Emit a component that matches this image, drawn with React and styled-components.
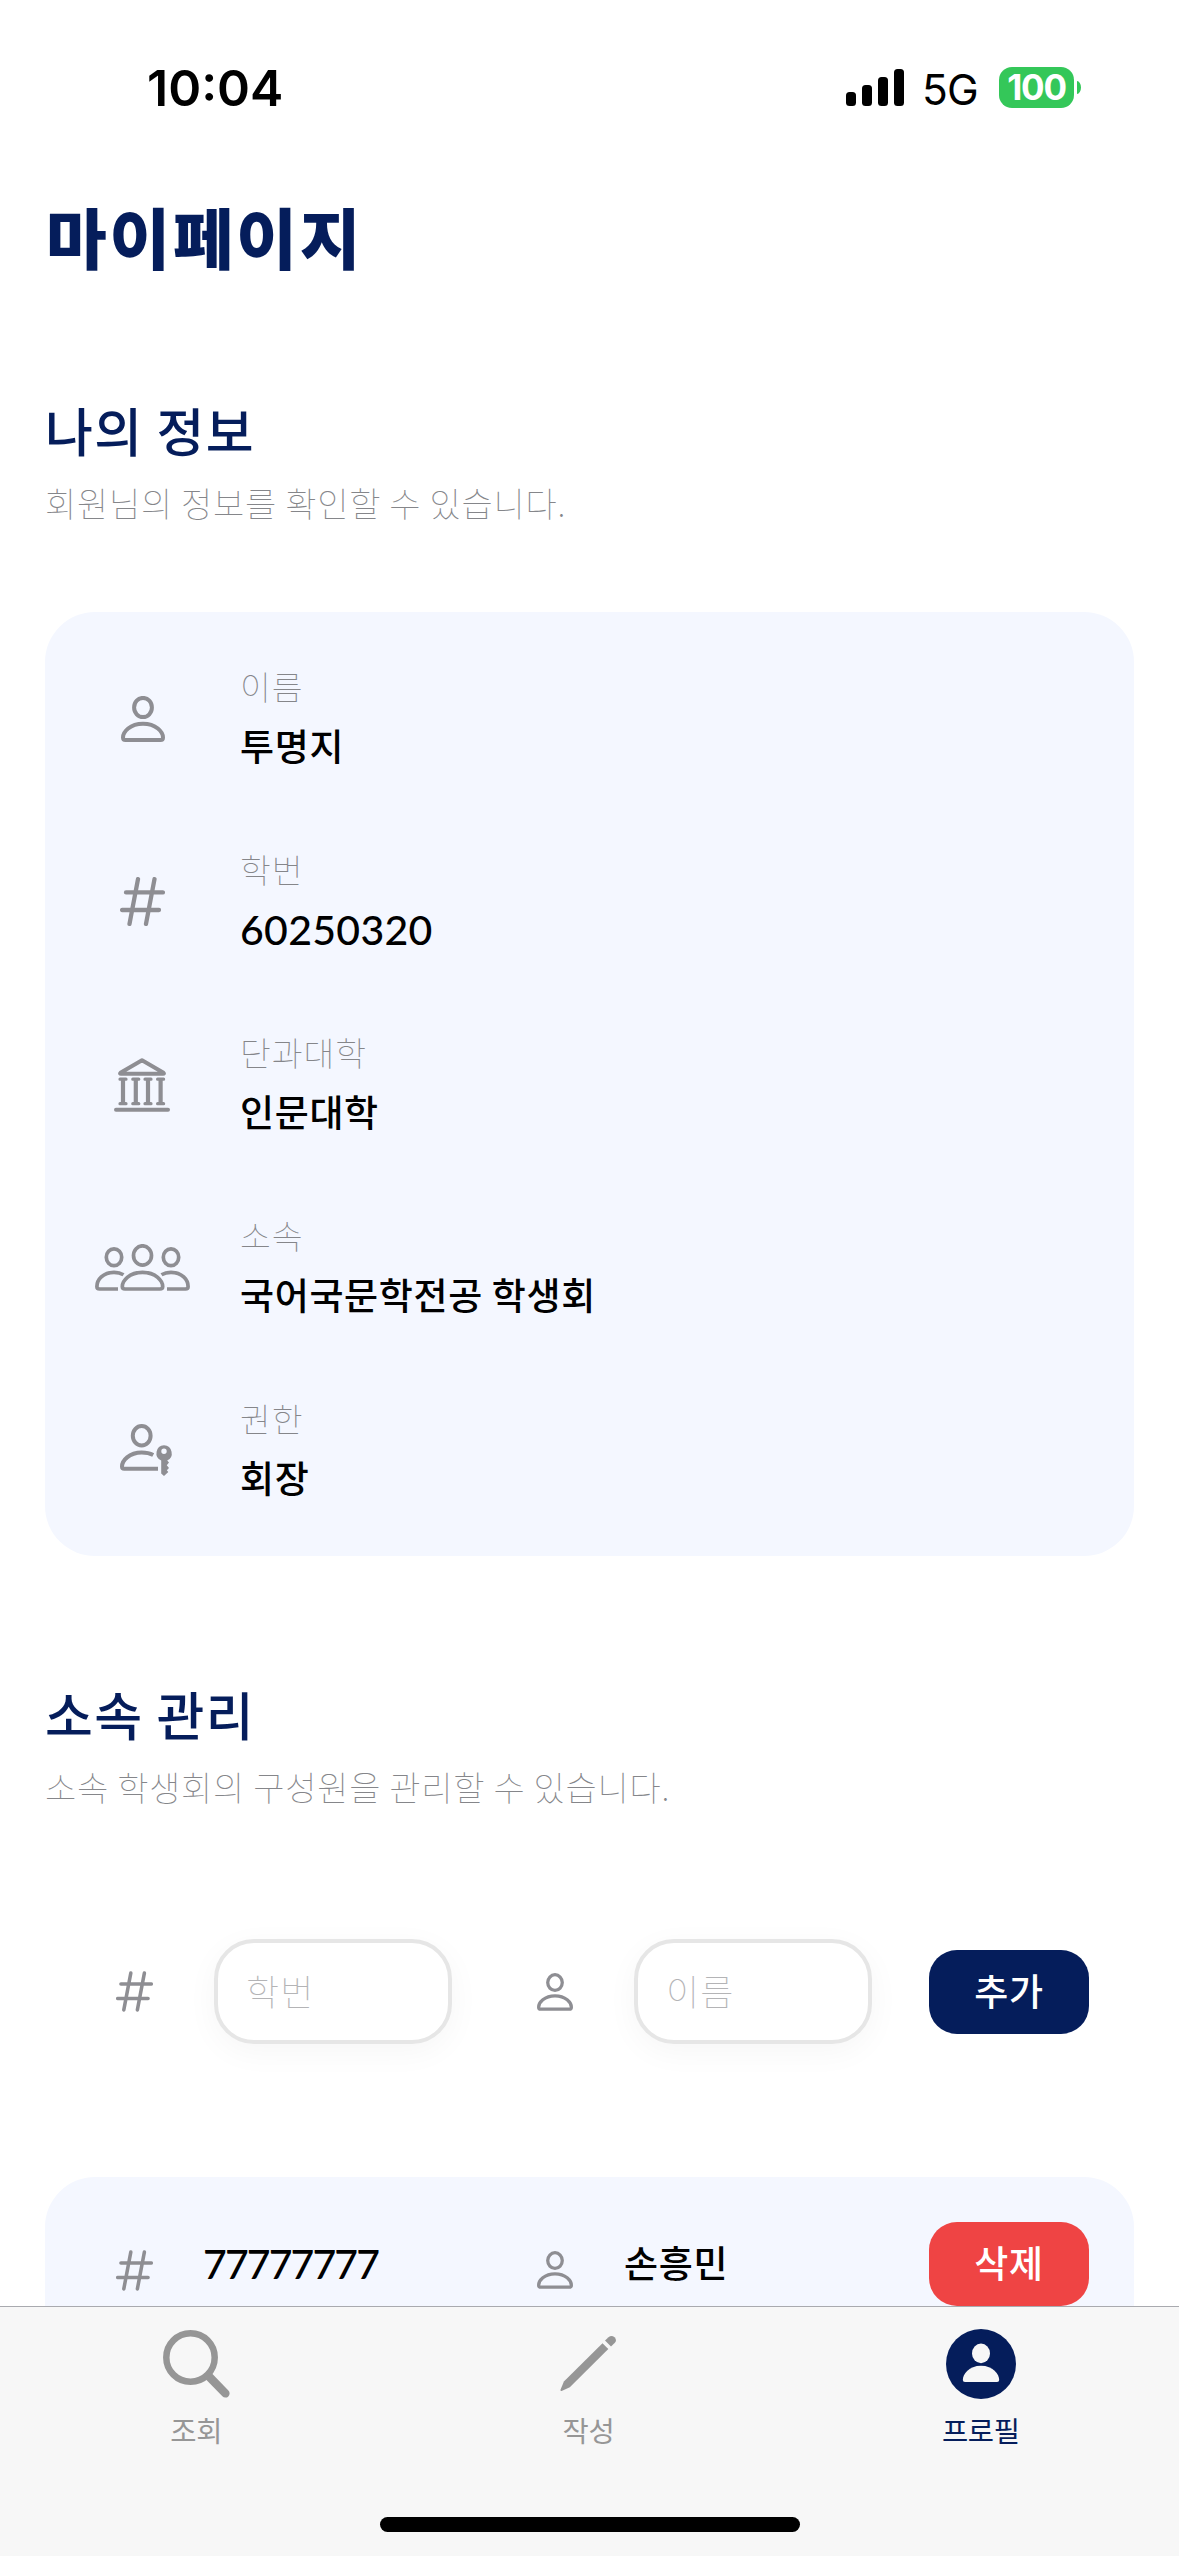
import React from "react";
import styled, { createGlobalStyle } from "styled-components";

const navy = "#051d5b";
const iconGray = "#8e8e93";
const hangul = '"Noto Sans CJK KR", sans-serif';

const GlobalStyle = createGlobalStyle`
  * { box-sizing: border-box; }
  body { margin: 0; background: #fff; font-family: ${hangul}; }
  svg { display: block; flex: none; }
`;

const Screen = styled.div`
  width: 1179px;
  height: 2556px;
  display: flex;
  flex-direction: column;
  overflow: hidden;
  background: #fff;
`;

const StatusBar = styled.header`
  flex: none;
  height: 175px;
  padding: 0 98px 0 147px;
  display: flex;
  align-items: center;
  justify-content: space-between;
  font-family: Inter, sans-serif;
  color: #000;
`;

const Clock = styled.span`
  font-size: 50px;
  line-height: 60px;
  font-weight: 600;
`;

const StatusRight = styled.div`
  display: flex;
  align-items: center;
`;

const Signal = styled.div`
  display: flex;
  align-items: flex-end;
  gap: 6px;
  height: 37px;
`;

const SignalBar = styled.i`
  width: 10px;
  height: ${(p) => p.$h}px;
  border-radius: 3.5px;
  background: #000;
`;

const Network = styled.span`
  margin-left: 18px;
  width: 77px;
  font-size: 42.5px;
  line-height: 50px;
  font-weight: 400;
  letter-spacing: -0.8px;
  padding-top: 4px;
`;

const Battery = styled.div`
  width: 75px;
  height: 41px;
  border-radius: 13px;
  background: #34c759;
  color: #fff;
  font-size: 35px;
  line-height: 41px;
  font-weight: 700;
  letter-spacing: -1.2px;
  text-align: center;
`;

const BatteryTip = styled.i`
  margin-left: 3px;
  width: 4px;
  height: 13px;
  border-radius: 0 4px 4px 0 / 0 6.5px 6.5px 0;
  background: #34c759;
`;

const Content = styled.main`
  flex: 1;
  min-height: 0;
  overflow: hidden;
  padding: 20px 45px 0;
`;

const Title = styled.h1`
  margin: 0;
  padding-left: 1px;
  font-size: 66px;
  line-height: 80px;
  font-weight: 900;
  letter-spacing: 2.7px;
  color: ${navy};
`;

const SectionHead = styled.div`
  display: flex;
  flex-direction: column;
  gap: 18px;
  margin-top: ${(p) => p.$top}px;
`;

const SectionTitle = styled.h2`
  margin: 0;
  font-size: 52px;
  line-height: 66px;
  font-weight: 500;
  letter-spacing: 1.4px;
  color: ${navy};
`;

const SectionNote = styled.p`
  margin: 0;
  font-size: 34px;
  line-height: 44px;
  font-weight: 100;
  letter-spacing: 0.7px;
  color: #85868a;
`;

const Card = styled.section`
  border-radius: 50px;
  background: #f4f7ff;
`;

const InfoCard = styled(Card)`
  margin-top: 87px;
  padding: 15px 0 14px;
`;

const InfoRow = styled.div`
  display: flex;
  align-items: center;
  height: 183px;
`;

const InfoIcon = styled.div`
  width: 195px;
  display: flex;
  justify-content: center;
`;

const InfoText = styled.div`
  display: flex;
  flex-direction: column;
  gap: 12px;
  padding-bottom: 4px;
`;

const InfoLabel = styled.span`
  font-size: 33.5px;
  line-height: 44px;
  font-weight: 100;
  letter-spacing: 0.9px;
  color: #85868a;
`;

const InfoValue = styled.span`
  font-size: 37px;
  line-height: 50px;
  font-weight: 500;
  letter-spacing: 0.65px;
  color: #000;
`;

const Digits = styled.span`
  font-family: Lato, ${hangul};
  font-size: 41px;
  line-height: 50px;
  font-weight: 500;
  letter-spacing: ${(p) => p.$spacing}px;
  padding-top: ${(p) => p.$drop || 0}px;
  margin-bottom: -${(p) => p.$drop || 0}px;
  color: #000;
`;

const FormRow = styled.form`
  display: flex;
  align-items: center;
  height: 105px;
  margin-top: 130px;
  padding-left: 55px;
`;

const SmallIcon = styled.div`
  flex: none;
  width: 69px;
  display: flex;
  justify-content: center;
  padding-top: ${(p) => p.$drop || 0}px;
`;

const Field = styled.label`
  flex: none;
  width: 238px;
  height: 105px;
  margin: 0 68px 0 45px;
  padding: 0 28px 4px;
  display: flex;
  align-items: center;
  border: 4.5px solid #e6e6e6;
  border-radius: 40px;
  background: #fff;
  box-shadow: 0 8px 32px rgba(0, 0, 0, 0.04);
  font-size: 36px;
  line-height: 50px;
  font-weight: 100;
  letter-spacing: 1.2px;
  color: #b4b4b6;

  & + ${SmallIcon} + & {
    margin-right: 57px;
  }
`;

const ActionButton = styled.button`
  flex: none;
  width: 160px;
  height: 84px;
  padding: 0 0 4px;
  border: 0;
  border-radius: 28px;
  background: ${(p) => (p.$danger ? "#ef4444" : navy)};
  color: #fff;
  font-family: inherit;
  font-size: 37px;
  line-height: 50px;
  font-weight: 500;
  letter-spacing: 0.8px;
`;

const MemberCard = styled(Card)`
  height: 400px;
  margin-top: 133px;
  padding-top: 45px;
`;

const MemberRow = styled.div`
  display: flex;
  align-items: center;
  height: 84px;
  padding-left: 55px;
`;

const MemberCell = styled.div`
  display: flex;
  width: ${(p) => p.$w}px;
  padding: 0 0 ${(p) => p.$lift || 0}px ${(p) => p.$left}px;
`;

const TabBar = styled.nav`
  flex: none;
  height: 250px;
  border-top: 1px solid #a9aaaf;
  background: #f7f7f7;
  display: flex;
  flex-direction: column;
  align-items: center;
`;

const Tabs = styled.div`
  width: 100%;
  display: grid;
  grid-template-columns: repeat(3, 1fr);
  padding-right: 2px;
`;

const Tab = styled.div`
  display: flex;
  flex-direction: column;
  align-items: center;
  color: ${(p) => (p.$active ? navy : "#969696")};
`;

const TabIcon = styled.div`
  height: 92px;
  padding-top: 21px;
  display: flex;
  align-items: center;
`;

const TabLabel = styled.span`
  margin-top: 11px;
  font-size: 28.5px;
  line-height: 40px;
  font-weight: 400;
  letter-spacing: -0.3px;
`;

const HomeIndicator = styled.div`
  width: 420px;
  height: 15px;
  margin-top: 67px;
  border-radius: 8px;
  background: #000;
`;

const line = (w) => ({
  fill: "none",
  stroke: iconGray,
  strokeWidth: w,
  strokeLinecap: "round",
  strokeLinejoin: "round",
});

function PersonIcon({ width = 44, height = 46 }) {
  return (
    <svg width={width} height={height} viewBox="0 0 44 46" {...line(4)}>
      <ellipse cx="22" cy="11.5" rx="8.9" ry="9.6" />
      <path d="M4.5 44C2.8 44 2 43.2 2 41.5C2 36 9 27.7 22 27.7S42 36 42 41.5C42 43.2 41.2 44 39.5 44Z" />
    </svg>
  );
}

function HashIcon({ width = 45, height = 49 }) {
  return (
    <svg width={width} height={height} viewBox="0 0 45 49" {...line(4.3)}>
      <path d="M18 2.1L9.5 46.9M34.5 2.1L26 46.9M6 15.4H42.9M2.1 33H39" />
    </svg>
  );
}

function BankIcon() {
  return (
    <svg width="57" height="54" viewBox="0 0 57 54" {...line(4)}>
      <path d="M28 2.3L49.5 14.8Q50.5 15.8 49 15.8H7Q5.5 15.8 6.5 14.8Z" />
      <path d="M2 51.7H54" />
      <path
        d="M6 21.2H12M18.8 21.2H24.8M31 21.2H37M43.6 21.2H49.6M6 45.7H12M18.8 45.7H24.8M31 45.7H37M43.6 45.7H49.6"
        strokeWidth="3.2"
      />
      <path d="M9 22V45M21.8 22V45M34 22V45M46.6 22V45" strokeWidth="4.2" strokeLinecap="butt" />
    </svg>
  );
}

function GroupIcon() {
  return (
    <svg width="95" height="48" viewBox="0 0 95 48" {...line(3.7)}>
      <ellipse cx="47.5" cy="11.5" rx="9" ry="9.7" />
      <ellipse cx="19" cy="13.3" rx="7.7" ry="8.4" />
      <ellipse cx="76" cy="13.3" rx="7.7" ry="8.4" />
      <path d="M30 45C28 45 27.3 44.2 27.3 42.5C27.3 37 34 28.3 47.5 28.3S67.7 37 67.7 42.5C67.7 44.2 67 45 65 45Z" />
      <g strokeLinecap="butt">
        <path d="M28.5 30.8Q24.5 28.3 19 28.3C8 28.3 1.9 36 1.9 42.5Q1.9 45 4.5 45H23" />
        <path d="M66.5 30.8Q70.5 28.3 76 28.3C87 28.3 93.1 36 93.1 42.5Q93.1 45 90.5 45H72" />
      </g>
    </svg>
  );
}

function PersonKeyIcon() {
  return (
    <svg width="60" height="54" viewBox="-7 0 60 54" {...line(4)}>
      <ellipse cx="21.7" cy="11.8" rx="8.9" ry="9.7" />
      <path
        d="M33.2 31Q28.5 28.4 21.7 28.4C9 28.4 2 37 2 42.5Q2 44.8 4.3 44.8H38"
        strokeLinecap="butt"
      />
      <path
        fill={iconGray}
        stroke="none"
        fillRule="evenodd"
        d="M44 21.3A8 8 0 0 1 47.2 36.5L49 38.5L46.8 41.2L49 44L46.8 46.2L48.3 48L44 52L41.2 49.4V36.6A8 8 0 0 1 44 21.3ZM44 24.6A2.7 2.7 0 1 0 44 30A2.7 2.7 0 1 0 44 24.6Z"
      />
    </svg>
  );
}

function SearchIcon() {
  return (
    <svg width="67" height="68" viewBox="0 0 67 68" fill="none" stroke="currentColor">
      <circle cx="27.5" cy="27.5" r="24.2" strokeWidth="6.5" />
      <path d="M45.5 46L62.4 63.4" strokeWidth="8.4" strokeLinecap="round" />
    </svg>
  );
}

function PencilIcon() {
  return (
    <svg width="57" height="57" viewBox="0 0 57 57" fill="currentColor">
      <path d="M42.5 8.2L48.3 14L9.8 52.3L1.6 56Q0.2 56.2 0.5 54.8L3.9 46.5Z" />
      <path d="M45 5.6L48.5 2.2Q51.5 -0.4 54.5 2.2Q57.4 5.2 54.6 8L51 11.5Z" />
    </svg>
  );
}

function ProfileIcon() {
  return (
    <svg width="70" height="70" viewBox="0 0 70 70" fill="#f7f7f7">
      <circle cx="35" cy="35" r="35" fill="currentColor" />
      <ellipse cx="35" cy="24.4" rx="9" ry="9.8" />
      <path d="M19 53Q16.8 53 16.8 51C16.8 45 23 36.7 35 36.7S53.2 45 53.2 51Q53.2 53 51 53Z" />
    </svg>
  );
}

const info = [
  { label: "이름", value: "투명지", Icon: PersonIcon },
  { label: "학번", value: "60250320", Icon: HashIcon, numeric: true },
  { label: "단과대학", value: "인문대학", Icon: BankIcon },
  { label: "소속", value: "국어국문학전공 학생회", Icon: GroupIcon },
  { label: "권한", value: "회장", Icon: PersonKeyIcon },
];

const tabs = [
  { label: "조회", Icon: SearchIcon },
  { label: "작성", Icon: PencilIcon },
  { label: "프로필", Icon: ProfileIcon, active: true },
];

export default function App() {
  return (
    <Screen>
      <GlobalStyle />
      <StatusBar>
        <Clock>10:04</Clock>
        <StatusRight>
          <Signal>
            <SignalBar $h={14} />
            <SignalBar $h={21} />
            <SignalBar $h={29} />
            <SignalBar $h={37} />
          </Signal>
          <Network>5G</Network>
          <Battery>100</Battery>
          <BatteryTip />
        </StatusRight>
      </StatusBar>

      <Content>
        <Title>마이페이지</Title>

        <SectionHead $top={122}>
          <SectionTitle>나의 정보</SectionTitle>
          <SectionNote>회원님의 정보를 확인할 수 있습니다.</SectionNote>
        </SectionHead>

        <InfoCard>
          {info.map(({ label, value, Icon, numeric }) => (
            <InfoRow key={label}>
              <InfoIcon>
                <Icon />
              </InfoIcon>
              <InfoText>
                <InfoLabel>{label}</InfoLabel>
                {numeric ? (
                  <Digits $spacing={0.3} $drop={2}>{value}</Digits>
                ) : (
                  <InfoValue>{value}</InfoValue>
                )}
              </InfoText>
            </InfoRow>
          ))}
        </InfoCard>

        <SectionHead $top={125}>
          <SectionTitle>소속 관리</SectionTitle>
          <SectionNote>소속 학생회의 구성원을 관리할 수 있습니다.</SectionNote>
        </SectionHead>

        <FormRow>
          <SmallIcon>
            <HashIcon width={37} height={41} />
          </SmallIcon>
          <Field>학번</Field>
          <SmallIcon>
            <PersonIcon width={36} height={38} />
          </SmallIcon>
          <Field>이름</Field>
          <ActionButton type="button">추가</ActionButton>
        </FormRow>

        <MemberCard>
          <MemberRow>
            <SmallIcon $drop={12}>
              <HashIcon width={37} height={41} />
            </SmallIcon>
            <MemberCell $w={351} $left={34} $lift={1}>
              <Digits $spacing={-1.9}>77777777</Digits>
            </MemberCell>
            <SmallIcon $drop={12}>
              <PersonIcon width={36} height={38} />
            </SmallIcon>
            <MemberCell $w={340} $left={35} $lift={5}>
              <InfoValue>손흥민</InfoValue>
            </MemberCell>
            <ActionButton type="button" $danger>
              삭제
            </ActionButton>
          </MemberRow>
        </MemberCard>
      </Content>

      <TabBar>
        <Tabs>
          {tabs.map(({ label, Icon, active }) => (
            <Tab key={label} $active={active}>
              <TabIcon>
                <Icon />
              </TabIcon>
              <TabLabel>{label}</TabLabel>
            </Tab>
          ))}
        </Tabs>
        <HomeIndicator />
      </TabBar>
    </Screen>
  );
}
